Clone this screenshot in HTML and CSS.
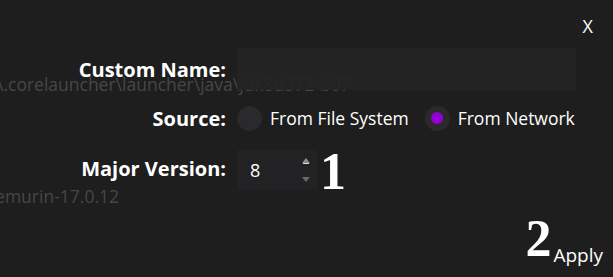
FILE: index.html
```html
<!DOCTYPE html>
<html>
<head>
    <title>Java Settings</title>
    <link rel="stylesheet" href="styles.css">
</head>
<body>
    <div class="window">
        <div class="ghost ghost-path">\.corelauncher\launcher\java\jdk8u372-b07</div>
        <div class="ghost ghost-name">temurin-17.0.12</div>

        <button class="close">X</button>

        <div class="form">
            <label class="label" for="customName">Custom Name:</label>
            <input class="text-box" type="text" id="customName">

            <span class="label">Source:</span>
            <div class="radios">
                <label class="radio">
                    <span class="dot"></span>
                    From File System
                </label>
                <label class="radio checked">
                    <span class="dot"></span>
                    From Network
                </label>
            </div>

            <label class="label" for="majorVersion">Major Version:</label>
            <div class="version-row">
                <div class="spin-box">
                    <span class="spin-value">8</span>
                    <div class="spin-arrows">
                        <span class="arrow up"></span>
                        <span class="arrow down"></span>
                    </div>
                </div>
                <span class="marker">1</span>
            </div>
        </div>

        <div class="footer">
            <span class="marker">2</span>
            <button class="apply">Apply</button>
        </div>
    </div>
</body>
</html>
```

FILE: styles.css
```css
body {
    margin: 0;
    background: #1e1e1e;
    font-family: "Open Sans", sans-serif;
    color: #fff;
    overflow: hidden;
}

.window {
    position: relative;
    width: 613px;
    height: 277px;
}

.ghost {
    position: absolute;
    color: #474747;
    font-size: 17.5px;
    white-space: nowrap;
}

.ghost-path {
    left: -3px;
    top: 72px;
}

.ghost-name {
    right: 494px;
    top: 184px;
}

.close {
    position: absolute;
    top: 14px;
    right: 20px;
    background: none;
    border: none;
    color: #fff;
    font-family: inherit;
    font-size: 18px;
    padding: 0;
    cursor: pointer;
}

.form {
    display: grid;
    grid-template-columns: 226px 1fr;
    column-gap: 11px;
    padding-top: 48px;
    position: relative;
}

.label {
    text-align: right;
    font-weight: bold;
    font-size: 20px;
    align-self: center;
}

.text-box {
    width: 339px;
    height: 42px;
    box-sizing: border-box;
    background: rgba(35, 35, 37, 0.9);
    border: none;
    outline: none;
    color: #fff;
}

.radios {
    display: flex;
    align-items: center;
    gap: 16px;
    height: 56px;
}

.radio {
    display: flex;
    align-items: center;
    gap: 8px;
    font-size: 17.5px;
}

.dot {
    width: 25px;
    height: 25px;
    border-radius: 50%;
    background: #2a2a2c;
    display: flex;
    align-items: center;
    justify-content: center;
}

.checked .dot::after {
    content: "";
    width: 12px;
    height: 12px;
    border-radius: 50%;
    background: #9400d3;
}

.version-row {
    display: flex;
    align-items: center;
    gap: 3px;
    height: 40px;
    margin-top: 4px;
}

.version-row .marker {
    margin-top: 4px;
}

.spin-box {
    width: 80px;
    height: 40px;
    background: #222224;
    display: flex;
    align-items: center;
    justify-content: space-between;
    padding: 0 7px 0 13px;
    box-sizing: border-box;
}

.spin-value {
    font-size: 18px;
}

.spin-arrows {
    display: flex;
    flex-direction: column;
    gap: 14px;
}

.arrow {
    width: 0;
    height: 0;
    border-left: 4px solid transparent;
    border-right: 4px solid transparent;
}

.arrow.up {
    border-bottom: 5px solid #8a8a8a;
    box-shadow: 0 2px 0 -1px #ddd;
}

.arrow.down {
    border-top: 5px solid #6a6a6a;
}

.marker {
    font-family: "Liberation Serif", serif;
    font-weight: bold;
    font-size: 52px;
    line-height: 1;
}

.footer {
    position: absolute;
    right: 10px;
    bottom: 12px;
    display: flex;
    align-items: flex-end;
    gap: 2px;
}

.apply {
    background: none;
    border: none;
    color: #fff;
    font-family: inherit;
    font-size: 19px;
    padding: 0;
    margin-bottom: -3px;
    cursor: pointer;
}
```
